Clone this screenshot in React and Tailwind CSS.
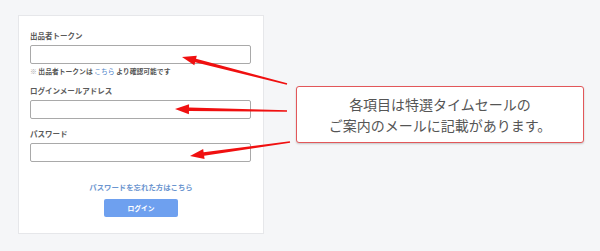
import React from "react";

const jp = { fontFamily: '"Noto Sans CJK JP", "Noto Sans", sans-serif' };

function arrowPoints(x1, y1, x2, y2, headLen = 14, headW = 5, tailW = 0.8, neckW = 1.8) {
  const dx = x2 - x1;
  const dy = y2 - y1;
  const len = Math.hypot(dx, dy);
  const ux = dx / len;
  const uy = dy / len;
  const px = -uy;
  const py = ux;
  const bx = x2 - ux * headLen;
  const by = y2 - uy * headLen;
  const pts = [
    [x1 + px * tailW, y1 + py * tailW],
    [bx + px * neckW, by + py * neckW],
    [bx + px * headW, by + py * headW],
    [x2, y2],
    [bx - px * headW, by - py * headW],
    [bx - px * neckW, by - py * neckW],
    [x1 - px * tailW, y1 - py * tailW],
  ];
  return pts.map((p) => p.join(",")).join(" ");
}

function Field({ label, className = "" }) {
  return (
    <div className={className}>
      <p className="text-[7.5px] leading-[12px] font-bold text-[#5a5a5a]">{label}</p>
      <div className="mt-[3px] h-[19px] w-[221px] rounded-[2px] border border-[#a9a9a9] bg-white" />
    </div>
  );
}

export default function App() {
  const arrows = [
    [287, 84, 182, 57],
    [287, 111, 175, 109],
    [290, 142, 190, 156],
  ];

  return (
    <div className="relative flex h-[251px] w-[600px] overflow-hidden bg-[#f5f6f8]" style={jp}>
      <div className="ml-[18px] mt-[15px] flex h-[219px] w-[246px] flex-col border border-[#e6e7ea] bg-white pl-[11px] pt-[14px]">
        <Field label="出品者トークン" />
        <p className="mt-[2px] text-[6.8px] leading-[11px] font-bold text-[#555]">
          <span className="text-[#aaa]">※</span> 出品者トークンは{" "}
          <span className="font-normal text-[#4a7fc8]">こちら</span> より確認可能です
        </p>
        <Field label="ログインメールアドレス" className="mt-[8px]" />
        <Field label="パスワード" className="mt-[9px]" />
        <div className="mr-[11px] mt-[19px] flex flex-col items-center">
          <p className="text-[7.4px] leading-[12px] font-bold text-[#6b95cf]">パスワードを忘れた方はこちら</p>
          <div className="mt-[6px] flex h-[18px] w-[74px] items-center justify-center rounded-[2px] bg-[#6ea0ef] text-[6.8px] font-bold text-white">
            ログイン
          </div>
        </div>
      </div>

      <div className="ml-[32px] mt-[86px] flex h-[57px] w-[288px] flex-col items-center justify-center rounded-[3px] border-[1.5px] border-[#e2575a] bg-white text-[14px] leading-[21px] text-[#555] shadow-[0_1px_2px_rgba(0,0,0,0.2)]">
        <p>各項目は特選タイムセールの</p>
        <p>ご案内のメールに記載があります。</p>
      </div>

      <svg className="pointer-events-none absolute left-0 top-0" width="600" height="251" viewBox="0 0 600 251">
        {arrows.map((a, i) => (
          <polygon key={i} points={arrowPoints(...a)} fill="#f01010" />
        ))}
      </svg>
    </div>
  );
}
